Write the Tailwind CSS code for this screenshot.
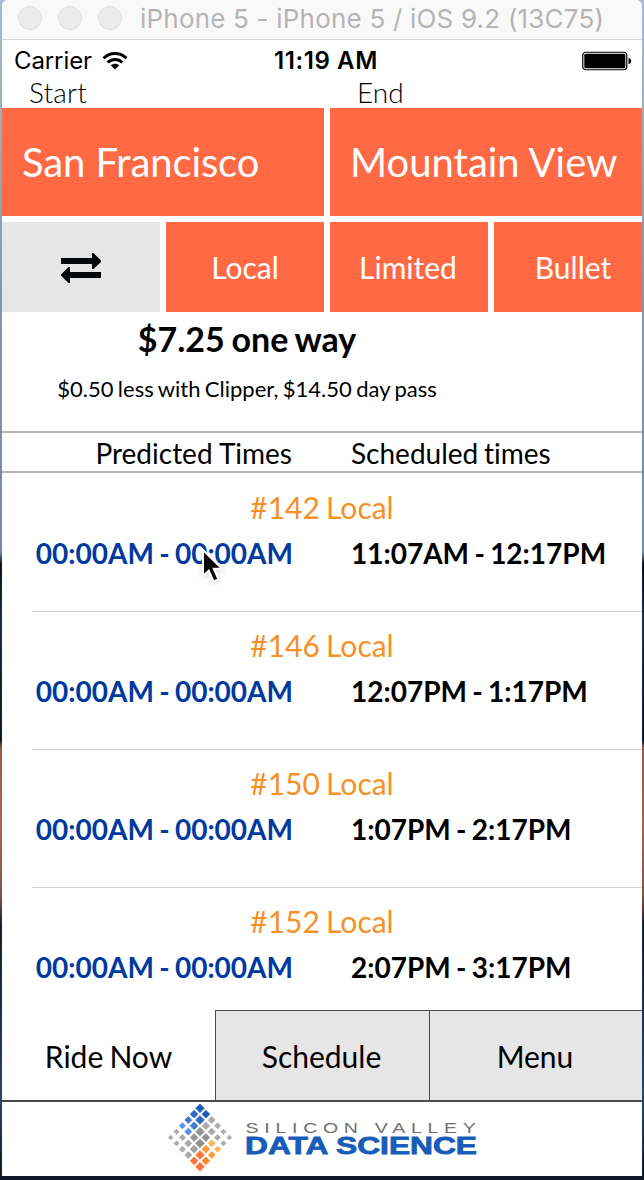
<!DOCTYPE html>
<html lang="en">
<head>
<meta charset="utf-8">
<title>Ride Now</title>
<script src="https://cdn.jsdelivr.net/npm/@tailwindcss/browser@4"></script>
</head>
<body class="w-[644px] h-[1180px] overflow-hidden bg-[linear-gradient(180deg,#a9b9cf_0px,#8496b2_300px,#7488ac_552px,#0c1420_564px,#1c2c4c_620px,#101a2c_740px,#a05a48_748px,#b06350_830px,#8a5048_895px,#1a2030_925px,#1c2c4c_1000px,#2c4470_1100px,#101624_1180px)] font-['Lato',sans-serif] text-black whitespace-nowrap [font-variant-ligatures:none]">
<div class="mx-[2px] h-[1176px] w-[640px] rounded-t-md bg-white overflow-hidden flex flex-col">
  <header class="h-10 shrink-0 bg-[#faf9fa] border-b border-[#d4d4d4] flex items-center pl-4 pb-[2px]">
    <div class="flex gap-4 pb-[2px]">
      <i class="size-6 rounded-full bg-[#ebebeb] border border-[#dcdcdc]"></i>
      <i class="size-6 rounded-full bg-[#ebebeb] border border-[#dcdcdc]"></i>
      <i class="size-6 rounded-full bg-[#ebebeb] border border-[#dcdcdc]"></i>
    </div>
    <span class="ml-[18px] font-['Inter',sans-serif] text-[26px] tracking-[0.2px] text-[#b5b4b5]">iPhone 5 - iPhone 5 / iOS 9.2 (13C75)</span>
  </header>
  <div class="h-10 shrink-0 pt-[2px] grid grid-cols-[272px_1fr_auto] items-center font-['Inter',sans-serif] text-[24px]">
    <div class="flex items-center pl-3">
      <span class="tracking-[-0.1px]">Carrier</span>
      <svg class="ml-[10px] w-[26px] h-[20px]" viewBox="0 0 26 20"><g fill="none" stroke="#000" stroke-width="3"><path d="M1.500 7.200C8 .8 18 .8 24.500 7.200"/><path d="M5.600 11.500C10 7.500 16 7.500 20.400 11.500"/></g><path d="M8.700 14.300C11 12.200 15 12.200 17.300 14.300L13 18.600Z"/></svg>
    </div>
    <span class="font-semibold tracking-[0.6px]">11:19 AM</span>
    <svg class="mr-[10px] w-[50px] h-[20px]" viewBox="0 0 50 20"><rect x=".75" y="1.250" width="44" height="17.500" rx="3" fill="none" stroke="#000" stroke-width="1.200"/><rect x="2.300" y="2.800" width="41" height="14.400" rx="1.500"/><path d="M46.500 6.800C50.200 7.500 50.200 12.500 46.500 13.200Z"/></svg>
  </div>
  <div class="h-7 shrink-0 grid grid-cols-[328px_1fr] text-[28px] leading-[24px] font-light">
    <span class="pl-[27px] tracking-[0.2px]">Start</span><span class="pl-[27px]">End</span>
  </div>
  <div class="h-[108px] shrink-0 grid grid-cols-[322px_322px] gap-[6px] text-[40px] leading-[108px] text-white">
    <div class="bg-[#ff6a45] pl-[20px] tracking-[-0.1px]">San Francisco</div>
    <div class="bg-[#ff6a45] pl-[20px]">Mountain View</div>
  </div>
  <div class="mt-[6px] h-[90px] shrink-0 grid grid-cols-[repeat(4,158px)] gap-[6px] text-center text-[30px] leading-[90px] text-white">
    <div class="bg-[#e6e6e6] flex items-center justify-center"><svg class="w-[40px] h-[30px] mt-[2px]" viewBox="0 0 40 30"><path fill="#030608" d="M0 5h31V0h1.500L40 7.500V9L32.500 16H31V11H0ZM40 25H9V30H7.500L0 22.800V21.500L7.500 14H9V19H40Z"/></svg></div>
    <div class="bg-[#ff6a45]">Local</div>
    <div class="bg-[#ff6a45] pr-[2px]">Limited</div>
    <div class="bg-[#ff6a45]">Bullet</div>
  </div>
  <div class="h-[119px] shrink-0 w-[490px] text-center">
    <div class="text-[34px] font-bold leading-[54px] [word-spacing:-1.5px]">$7.25 one way</div>
    <div class="text-[22px] leading-[45px] [word-spacing:-1.2px]">$0.50 less with Clipper, $14.50 day pass</div>
  </div>
  <div class="h-[42px] shrink-0 border-y-2 border-[#b3b3b3] grid grid-cols-[290px_1fr] text-[28px] leading-[40px]">
    <span class="text-right">Predicted Times</span><span class="pl-[59px] [word-spacing:-1.5px]">Scheduled times</span>
  </div>
  <main class="h-[537px] shrink-0 overflow-hidden">
    <section class="ml-[30px] h-[139px] border-b border-[#d0d0d0] pt-[14px]">
      <h2 class="mr-[30px] text-center text-[30px] leading-[40px] [word-spacing:-1.5px] text-[#f59127]">#142 Local</h2>
      <div class="mt-[6px] grid grid-cols-[261px_1fr] text-[28px] leading-[40px] [word-spacing:-1.5px] font-bold"><span class="text-right text-[#003a9f]">00:00AM - 00:00AM</span><span class="pl-[58px]">11:07AM - 12:17PM</span></div>
    </section>
    <section class="ml-[30px] h-[138px] border-b border-[#d0d0d0] pt-[13px]">
      <h2 class="mr-[30px] text-center text-[30px] leading-[40px] [word-spacing:-1.5px] text-[#f59127]">#146 Local</h2>
      <div class="mt-[6px] grid grid-cols-[261px_1fr] text-[28px] leading-[40px] [word-spacing:-1.5px] font-bold"><span class="text-right text-[#003a9f]">00:00AM - 00:00AM</span><span class="pl-[58px]">12:07PM - 1:17PM</span></div>
    </section>
    <section class="ml-[30px] h-[138px] border-b border-[#d0d0d0] pt-[13px]">
      <h2 class="mr-[30px] text-center text-[30px] leading-[40px] [word-spacing:-1.5px] text-[#f59127]">#150 Local</h2>
      <div class="mt-[6px] grid grid-cols-[261px_1fr] text-[28px] leading-[40px] [word-spacing:-1.5px] font-bold"><span class="text-right text-[#003a9f]">00:00AM - 00:00AM</span><span class="pl-[58px]">1:07PM - 2:17PM</span></div>
    </section>
    <section class="ml-[30px] h-[138px] pt-[13px]">
      <h2 class="mr-[30px] text-center text-[30px] leading-[40px] [word-spacing:-1.5px] text-[#f59127]">#152 Local</h2>
      <div class="mt-[6px] grid grid-cols-[261px_1fr] text-[28px] leading-[40px] [word-spacing:-1.5px] font-bold"><span class="text-right text-[#003a9f]">00:00AM - 00:00AM</span><span class="pl-[58px]">2:07PM - 3:17PM</span></div>
    </section>
  </main>
  <nav class="h-[92px] shrink-0 border-b-2 border-[#4b4b4b] grid grid-cols-[213px_214px_213px] text-center text-[30px] leading-[92px]">
    <div class="[word-spacing:-1.5px]">Ride Now</div>
    <div class="h-[90px] bg-[#e6e6e6] border-l border-t border-[#4b4b4b] leading-[90px] pr-[2px]">Schedule</div>
    <div class="h-[90px] bg-[#e6e6e6] border-l border-t border-[#4b4b4b] leading-[90px] pr-[2px]">Menu</div>
  </nav>
  <footer class="h-[74px] shrink-0 pl-[166px]">
    <svg class="w-[312px] h-[74px]" viewBox="168 1102 312 74">
      <g id="dots"></g>
      <text transform="translate(245.500 1132.700) scale(1.320 1)" font-family="Liberation Sans, sans-serif" font-size="14.800" fill="#707070" textLength="174.500" lengthAdjust="spacing">SILICON VALLEY</text>
      <text x="245" y="1154" font-family="Liberation Sans, sans-serif" font-weight="bold" font-size="23" fill="#175cb8" stroke="#175cb8" stroke-width=".8" textLength="232" lengthAdjust="spacingAndGlyphs">DATA SCIENCE</text>
    </svg>
  </footer>
</div>
<svg class="absolute left-[198px] top-[545px] w-[30px] h-[44px] drop-shadow-sm" viewBox="0 0 30 44"><path d="M5 5V31L10.800 25.600L15.500 36.500L20.500 34.300L15.800 23.800H24Z" fill="#000" stroke="#fff" stroke-width="2"/></svg>
<script>
const rows = [
  ['#1a5cb6'],
  ['#316cc4', '#1a5cb6'],
  ['#4079d2', '#2b68c0', '#adadad'],
  ['#5190ea', '#4079d2', '#adadad', '#adadad'],
  ['#adadad', '#5190ea', '#969696', '#a6a6a6', '#adadad'],
  ['#a8a8a8', '#a8a8a8', '#969696', '#909090', '#a8a8a8', '#a8a8a8'],
  ['#adadad', '#a8a8a8', '#909090', '#ffb24c', '#adadad'],
  ['#adadad', '#a2a2a2', '#ff9b36', '#ffb24c'],
  ['#a8a8a8', '#ff7438', '#ff9b36'],
  ['#ff7438', '#ff8c24'],
  ['#ff7438']
];
document.getElementById('dots').innerHTML = rows.map((row, r) => row.map((c, i) => {
  const k = 2 * i - row.length + 1, x = 200 + k * 5.86, y = 1108.3 + r * 5.84;
  const h = 4.3 - Math.abs(k) * 0.42;
  return `<path fill="${c}" stroke="${c}" stroke-width=".8" stroke-linejoin="round" d="M${x} ${y - h}L${x + h} ${y}L${x} ${y + h}L${x - h} ${y}Z"/>`;
}).join('')).join('');
</script>
</body>
</html>
